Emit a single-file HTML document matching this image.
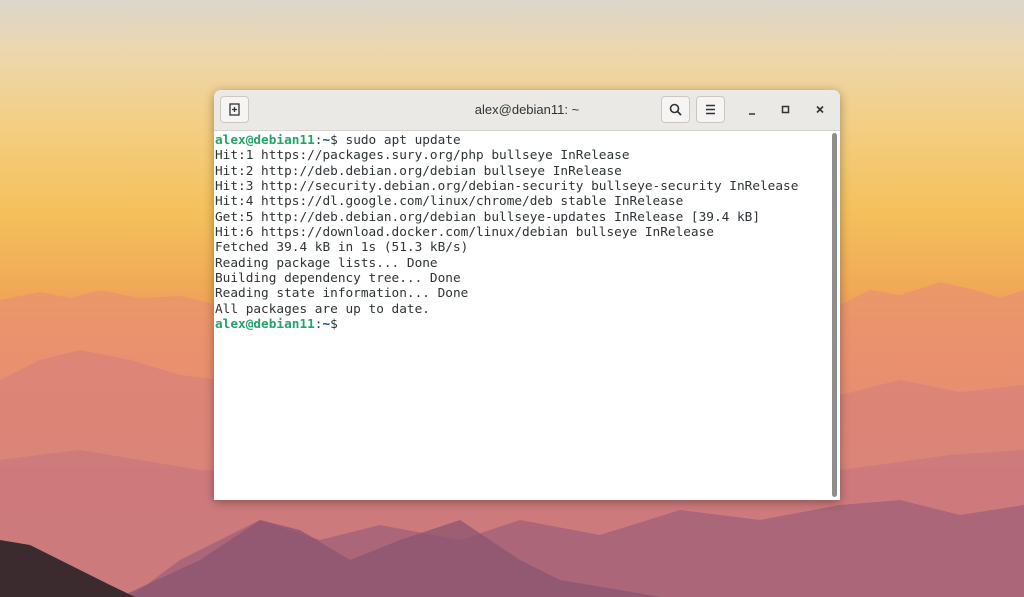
<!DOCTYPE html>
<html><head><meta charset="utf-8"><style>
html,body{margin:0;padding:0;width:1024px;height:597px;overflow:hidden;}
body{position:relative;background:linear-gradient(180deg,#dcd6cc 0%,#ecd7b0 8%,#f3cf86 20%,#f4c15c 35%,#f1aa57 48%,#e98c68 60%,#d47e7e 75%,#b76f85 90%,#a86882 100%);}
svg.bg{position:absolute;left:0;top:0}
.win{position:absolute;left:214px;top:90px;width:626px;height:410px;background:#fff;border-radius:7px 7px 0 0;box-shadow:0 2px 10px rgba(0,0,0,.35);overflow:hidden;}
.tb{height:40px;background:#ebe9e6;border-bottom:1px solid #d6d2cd;position:relative;font-family:"Liberation Sans","DejaVu Sans",sans-serif;}
.title{position:absolute;left:0;right:0;top:12px;text-align:center;font-size:13px;color:#2e3436;}
.btn{position:absolute;top:6px;width:29px;height:27px;background:#f6f5f4;border:1px solid #cdc7c2;border-radius:4px;box-sizing:border-box;}
.term{position:absolute;left:1px;top:43px;font-family:"DejaVu Sans Mono","Liberation Mono",monospace;font-size:12.75px;line-height:15.35px;color:#2e3436;white-space:pre;}
.g{color:#26a269;font-weight:bold}
.sb{position:absolute;left:618px;top:43px;width:5px;height:364px;background:#8d8d8b;border-radius:3px;}
</style></head><body>
<svg class="bg" width="1024" height="597" viewBox="0 0 1024 597">
<path d="M0 300 L40 292 L70 298 L100 290 L140 298 L180 296 L240 310 L500 320 L840 305 L870 290 L900 295 L940 282 L975 290 L1000 298 L1024 290 L1024 597 L0 597Z" fill="#ea9270" opacity=".75"/>
<path d="M0 380 L40 360 L80 350 L130 360 L180 375 L260 385 L600 400 L840 395 L900 380 L960 392 L1024 385 L1024 597 L0 597Z" fill="#d67e7c" opacity=".6"/>
<path d="M0 460 L80 450 L200 470 L500 480 L840 470 L950 455 L1024 450 L1024 597 L0 597Z" fill="#c2727f" opacity=".5"/>
<path d="M130 597 L180 560 L260 520 L320 540 L380 525 L460 540 L520 520 L600 535 L680 510 L760 520 L840 505 L900 500 L960 515 L1024 505 L1024 597Z" fill="#9c5e78" opacity=".7"/>
<path d="M120 597 L200 560 L260 520 L300 530 L350 560 L400 540 L460 520 L520 560 L560 580 L620 590 L660 597Z" fill="#8c5570" opacity=".75"/>
<path d="M0 540 L30 545 L70 565 L110 585 L135 597 L0 597Z" fill="#3b2a2e"/>
</svg>
<div class="win">
<div class="tb">
<div class="btn" style="left:6px"><svg width="27" height="25"><rect x="9" y="7" width="9" height="11" fill="none" stroke="#2e3436" stroke-width="1.3"/><path d="M13.5 10v5M11 12.5h5" stroke="#2e3436" stroke-width="1.3"/></svg></div>
<div class="title">alex@debian11: ~</div>
<div class="btn" style="left:447px"><svg width="27" height="25"><circle cx="12.5" cy="11.5" r="4" fill="none" stroke="#2e3436" stroke-width="1.6"/><path d="M15.5 14.5l3.5 3.5" stroke="#2e3436" stroke-width="1.8"/></svg></div>
<div class="btn" style="left:482px"><svg width="27" height="25"><path d="M9 8.5h9M9 12.5h9M9 16.5h9" stroke="#2e3436" stroke-width="1.4"/></svg></div>
<svg style="position:absolute;left:530px;top:14px" width="80" height="12"><path d="M5 10h6" stroke="#2e3436" stroke-width="1.6"/><rect x="38.5" y="2.5" width="6" height="6" fill="none" stroke="#2e3436" stroke-width="1.5"/><path d="M73 2.5l6 6M79 2.5l-6 6" stroke="#2e3436" stroke-width="1.6"/></svg>
</div>
<div class="term"><span class="g">alex@debian11</span>:<span style="color:#12488b;font-weight:bold">~</span>$ sudo apt update
Hit:1 https://packages.sury.org/php bullseye InRelease
Hit:2 http://deb.debian.org/debian bullseye InRelease
Hit:3 http://security.debian.org/debian-security bullseye-security InRelease
Hit:4 https://dl.google.com/linux/chrome/deb stable InRelease
Get:5 http://deb.debian.org/debian bullseye-updates InRelease [39.4 kB]
Hit:6 https://download.docker.com/linux/debian bullseye InRelease
Fetched 39.4 kB in 1s (51.3 kB/s)
Reading package lists... Done
Building dependency tree... Done
Reading state information... Done
All packages are up to date.
<span class="g">alex@debian11</span>:<span style="color:#12488b;font-weight:bold">~</span>$ </div>
<div class="sb"></div>
</div>
</body></html>
